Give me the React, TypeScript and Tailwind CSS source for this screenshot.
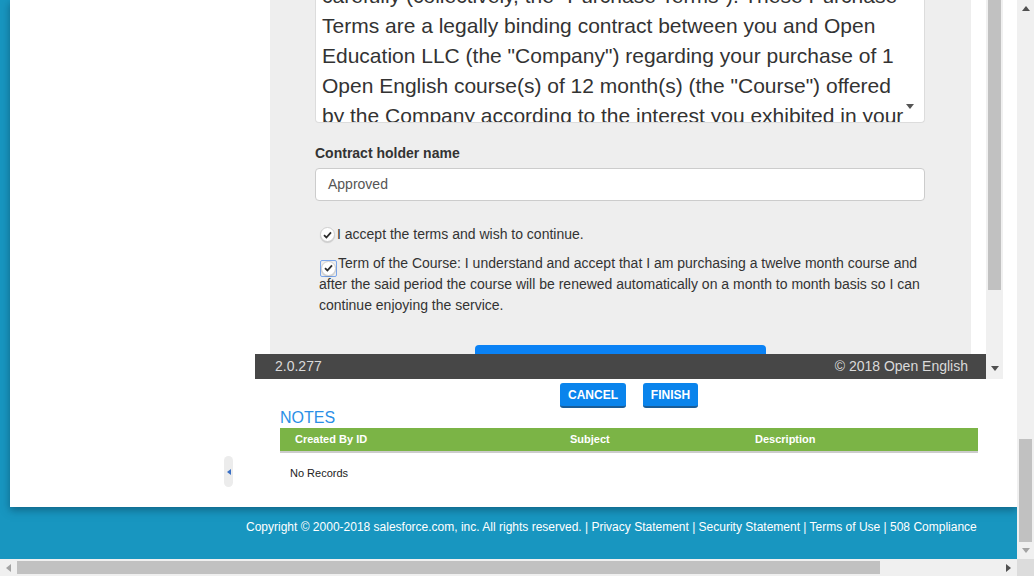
function Tri({ dir, color }: { dir: "up" | "down" | "left" | "right"; color: string }) {
  const pts = {
    up: "0,5 4,0 8,5",
    down: "0,0 8,0 4,5",
    left: "5,0 5,8 0,4",
    right: "0,0 0,8 5,4",
  }[dir];
  const horiz = dir === "up" || dir === "down";
  return (
    <svg width={horiz ? 8 : 5} height={horiz ? 5 : 8} viewBox={horiz ? "0 0 8 5" : "0 0 5 8"}>
      <polygon points={pts} fill={color} />
    </svg>
  );
}

function Check() {
  return (
    <span className="inline-flex w-[15px] h-[15px] rounded-full border border-[#cfcfcf] bg-white items-center justify-center shadow-[0_1px_1px_rgba(0,0,0,0.15)]">
      <svg width="9" height="8" viewBox="0 0 9 8">
        <path d="M1 4.2 L3.4 6.5 L8 1.3" stroke="#2d2d2d" strokeWidth="1.8" fill="none" />
      </svg>
    </span>
  );
}

const termLines = [
  'carefully (collectively, the "Purchase Terms"). These Purchase',
  "Terms are a legally binding contract between you and Open",
  'Education LLC (the "Company") regarding your purchase of 1',
  'Open English course(s) of 12 month(s) (the "Course") offered',
  "by the Company according to the interest you exhibited in your",
];

export default function App() {
  return (
    <div className="w-[1034px] h-[576px] overflow-hidden flex flex-col font-['Liberation_Sans',Arial,sans-serif]">
      <div className="flex h-[559px]">
        <div className="flex-1 flex flex-col bg-[#1896c0]">
          <div className="pl-[10px]">
            <div className="h-[507px] bg-white flex shadow-[0_3px_8px_rgba(10,60,85,0.55)]">
              {/* sidebar handle */}
              <div className="w-[245px] flex justify-end pr-[22px] pt-[456px]">
                <div className="w-[9px] h-[31px] rounded-full bg-[#ececec] flex items-center justify-center">
                  <svg width="4" height="6" viewBox="0 0 4 6">
                    <polygon points="4,0 4,6 0,3" fill="#3a6fc4" />
                  </svg>
                </div>
              </div>

              <div className="w-[748px] flex flex-col">
                {/* embedded frame */}
                <div className="h-[379px] flex shrink-0">
                  <div className="flex-1 relative overflow-hidden bg-white px-[15px]">
                    <div className="h-full bg-[#eeeeee] pl-[45px] pr-[46px] flex flex-col">
                      <div className="relative h-[123px] shrink-0 bg-white border border-t-0 border-[#dcdcdc] rounded-b-[4px] overflow-hidden pl-[6px]">
                        <div className="mt-[-19px] text-[21px] leading-[30px] text-[#333]">
                          {termLines.map((l) => (
                            <div key={l} className="whitespace-nowrap">{l}</div>
                          ))}
                        </div>
                        <div className="absolute right-[10px] bottom-[13px] bg-white pl-[2px]">
                          <Tri dir="down" color="#555" />
                        </div>
                      </div>

                      <div className="mt-[20px] shrink-0 text-[14px] leading-[20px] font-bold text-[#333]">Contract holder name</div>
                      <div className="mt-[5px] h-[33px] shrink-0 bg-white border border-[#cccccc] rounded-[4px] flex items-center px-[12px] text-[14px] text-[#555]">
                        Approved
                      </div>

                      <div className="mt-[23px] shrink-0 pl-[5px] text-[14px] leading-[21px] text-[#333] flex items-center">
                        <Check />
                        <span className="ml-[2px]">I accept the terms and wish to continue.</span>
                      </div>
                      <p className="mt-[8px] shrink-0 pl-[4px] text-[14px] leading-[21px] text-[#333]">
                        <span className="inline-flex w-[17px] h-[17px] my-[-3px] border border-[#7ba6ea] rounded-[2px] items-center justify-center align-[-4px] ml-[1px] mr-[1px]">
                          <Check />
                        </span>
                        Term of the Course: I understand and accept that I am purchasing a twelve month course and after the said period the course will be renewed automatically on a month to month basis so I can continue enjoying the service.
                      </p>

                      <div className="mt-[29px] mx-auto w-[291px] h-[40px] shrink-0 rounded-[4px] bg-[#0a82f5]" />
                    </div>

                    <div className="absolute left-0 right-0 bottom-0 h-[25px] bg-[#474747] flex items-center justify-between pl-[20px] pr-[18px] text-[14px] text-[#dadada]">
                      <span>2.0.277</span>
                      <span>© 2018 Open English</span>
                    </div>
                  </div>
                  <div className="w-[17px] bg-[#f0f0f0] flex flex-col items-center">
                    <div className="w-[13px] h-[290px] bg-[#c1c1c1]" />
                    <div className="flex-1" />
                    <div className="mb-[8px]">
                      <Tri dir="down" color="#505050" />
                    </div>
                  </div>
                </div>

                {/* actions */}
                <div className="mt-[4px] flex justify-center gap-[17px]">
                  <button className="h-[25px] w-[66px] rounded-[3px] bg-[#0a84ec] border-b-2 border-[#1a5d98] text-white text-[12px] font-bold">
                    CANCEL
                  </button>
                  <button className="h-[25px] w-[55px] rounded-[3px] bg-[#0a84ec] border-b-2 border-[#1a5d98] text-white text-[12px] font-bold">
                    FINISH
                  </button>
                </div>

                {/* notes */}
                <div className="px-[25px]">
                  <div className="mt-[1px] text-[16px] leading-[18px] text-[#2b8fe6]">NOTES</div>
                  <div className="mt-[1px] h-[25px] bg-[#7bb446] border-b-2 border-[#cccccc] flex items-center text-[11px] font-bold text-white">
                    <span className="w-[290px] pl-[15px]">Created By ID</span>
                    <span className="w-[185px]">Subject</span>
                    <span>Description</span>
                  </div>
                  <div className="pt-[14px] pl-[10px] text-[11px] leading-[13px] text-[#222]">No Records</div>
                </div>
              </div>
            </div>
          </div>

          <div className="pt-[13px] pl-[246px] text-[12px] leading-[14px] text-white whitespace-nowrap">
            Copyright © 2000-2018 salesforce.com, inc. All rights reserved. | Privacy Statement | Security Statement | Terms of Use | 508 Compliance
          </div>
        </div>

        {/* page vertical scrollbar */}
        <div className="w-[17px] bg-[#f0f0f0] flex flex-col items-center">
          <div className="h-[17px] flex items-center justify-center">
            <Tri dir="up" color="#505050" />
          </div>
          <div className="h-[422px]" />
          <div className="w-[13px] h-[103px] bg-[#c1c1c1]" />
          <div className="h-[17px] flex items-center justify-center">
            <Tri dir="down" color="#a3a3a3" />
          </div>
        </div>
      </div>

      {/* horizontal scrollbar */}
      <div className="h-[17px] flex bg-[#f0f0f0]">
        <div className="w-[17px] flex items-center justify-center">
          <Tri dir="left" color="#a3a3a3" />
        </div>
        <div className="w-[863px] h-[13px] mt-[2px] bg-[#c1c1c1]" />
        <div className="flex-1" />
        <div className="w-[17px] flex items-center justify-center">
          <Tri dir="right" color="#505050" />
        </div>
        <div className="w-[17px] bg-[#dcdcdc]" />
      </div>
    </div>
  );
}
